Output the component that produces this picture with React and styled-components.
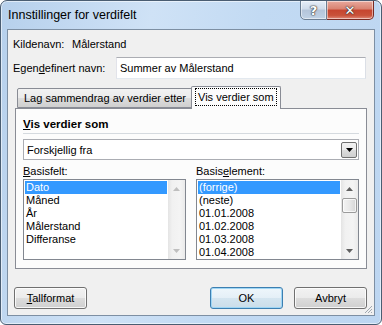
import React from 'react'
import styled, { createGlobalStyle } from 'styled-components'

const GlobalStyle = createGlobalStyle`
  body {
    margin: 0;
    background: #ffffff;
    font-family: "Liberation Sans", Arial, sans-serif;
  }
  * { box-sizing: border-box; }
`

const Window = styled.div`
  width: 382px;
  height: 325px;
  border: 1px solid #4a5d72;
  border-radius: 7px 7px 6px 6px;
  background: linear-gradient(100deg, #b6d0ec 0%, #cfe2f6 35%, #c2daf3 60%, #bdd6f1 100%);
  box-shadow: inset 0 0 0 1px rgba(255, 255, 255, 0.55);
  display: flex;
  flex-direction: column;
  overflow: hidden;
`

const TitleBar = styled.div`
  height: 28px;
  display: flex;
  align-items: flex-start;
`

const Title = styled.div`
  padding: 6px 0 0 7px;
  font-size: 12.5px;
  line-height: 16px;
  color: #000;
`

const CaptionButtons = styled.div`
  margin: -1px 7px 0 auto;
  display: flex;
`

const CaptionButton = styled.div`
  width: ${({ wide }) => (wide ? '47px' : '27px')};
  height: 20px;
  border: 1px solid ${({ danger }) => (danger ? '#7a2a22' : '#6b7e93')};
  border-left: ${({ danger }) => (danger ? 'none' : '1px solid #6b7e93')};
  border-radius: ${({ danger }) => (danger ? '0 0 5px 0' : '0 0 0 5px')};
  background: ${({ danger }) =>
    danger
      ? 'linear-gradient(#e8a99d 0%, #d98270 45%, #c6442f 50%, #c9523a 80%, #e0897a 100%)'
      : 'linear-gradient(#e6eef8 0%, #cfdbea 45%, #b4c5da 50%, #c0d2e6 100%)'};
  box-shadow: inset 0 0 0 1px rgba(255, 255, 255, 0.5);
  display: flex;
  align-items: center;
  justify-content: center;
  color: #fff;
  font-family: "DejaVu Sans", sans-serif;
  font-weight: bold;
  font-size: ${({ danger }) => (danger ? '13px' : '13px')};
  text-shadow: 0 0 1px #333, 0 0 1px #333, 0 0 2px #444;
`

const Panel = styled.div`
  margin: 0 6px;
  height: 287px;
  border: 1px solid #7d8fa3;
  background: #f0f0f0;
  display: flex;
  flex-direction: column;
  position: relative;
  font-size: 11px;
  color: #000;
`

const InfoRow = styled.div`
  margin-top: ${({ top }) => top}px;
  padding-left: 5px;
  display: flex;
  align-items: center;
  line-height: 14px;
`

const Label = styled.span`
  width: ${({ w }) => w}px;
  flex: none;
`

const TextBox = styled.div`
  width: 250px;
  height: 22px;
  border: 1px solid #abadb3;
  border-color: #abadb3 #dbdfe6 #e3e9ef #e2e3ea;
  background: #fff;
  padding: 0 3px;
  display: flex;
  align-items: center;
`

const TabStrip = styled.div`
  margin: 7px 0 0 7px;
  height: 22px;
  display: flex;
  align-items: flex-end;
  position: relative;
  z-index: 1;
`

const Tab = styled.div`
  height: ${({ active }) => (active ? '23px' : '20px')};
  margin-left: ${({ active }) => (active ? '-2px' : '2px')};
  margin-bottom: ${({ active }) => (active ? '-1px' : '0')};
  padding: 0 ${({ active }) => (active ? '4px' : '6px')};
  border: 1px solid #898c95;
  border-bottom: ${({ active }) => (active ? 'none' : '1px solid #898c95')};
  border-radius: 2px 2px 0 0;
  background: ${({ active }) =>
    active ? '#fcfcfc' : 'linear-gradient(#f2f2f2 0%, #ebebeb 50%, #dddddd 51%, #cfcfcf 100%)'};
  display: flex;
  align-items: center;
  padding-bottom: ${({ active }) => (active ? '2px' : '0')};
`

const FocusText = styled.span`
  outline: 1px dotted #000;
  outline-offset: 0;
  padding: 1px 2px;
  line-height: 14px;
`

const TabPane = styled.div`
  margin-left: 7px;
  width: 352px;
  height: 161px;
  border: 1px solid #898c95;
  background: #fcfcfc;
  padding: 0 7px;
  display: flex;
  flex-direction: column;
`

const Heading = styled.div`
  margin-top: 8px;
  font-weight: bold;
  font-size: 11.5px;
  line-height: 14px;
`

const Separator = styled.div`
  margin-top: 2px;
  height: 1px;
  background: #d5dadf;
`

const Dropdown = styled.div`
  margin-top: 5px;
  height: 21px;
  border: 1px solid #abadb3;
  background: #fff;
  display: flex;
  align-items: center;
  padding: 0 1px 0 3px;
`

const DropText = styled.span`
  flex: 1;
`

const DropButton = styled.div`
  width: 16px;
  height: 16px;
  border: 1px solid #707070;
  border-radius: 2px;
  background: linear-gradient(#f2f2f2 0%, #ebebeb 50%, #dddddd 51%, #cfcfcf 100%);
  display: flex;
  align-items: center;
  justify-content: center;
`

const Lists = styled.div`
  display: grid;
  grid-template-columns: 163px 163px;
  column-gap: 10px;
`

const ListLabel = styled.div`
  margin-top: 4px;
  line-height: 14px;
`

const ListBox = styled.div`
  margin-top: 1px;
  height: 81px;
  border: 1px solid #828790;
  background: #fff;
  display: flex;
`

const Items = styled.div`
  flex: 1;
  padding: 1px;
  overflow: hidden;
`

const Item = styled.div`
  height: 13px;
  line-height: 13px;
  padding-left: 1px;
  white-space: nowrap;
  background: ${({ selected }) => (selected ? '#3399ff' : 'transparent')};
  color: ${({ selected }) => (selected ? '#fff' : '#000')};
`

const ScrollBar = styled.div`
  width: 17px;
  display: flex;
  flex-direction: column;
  background: linear-gradient(to right, #e4e4e4 0%, #f1f1f1 25%, #f4f4f4 70%, #eaeaea 100%);
`

const ScrollArrow = styled.div`
  height: 17px;
  display: flex;
  align-items: center;
  justify-content: center;
`

const Track = styled.div`
  flex: 1;
  padding: 1px 1px 0;
`

const Thumb = styled.div`
  height: 15px;
  border: 1px solid #9b9b9b;
  border-radius: 2px;
  background: linear-gradient(to right, #f3f3f3 0%, #e8e8e8 50%, #d6d6d6 100%);
  box-shadow: inset 0 0 0 1px rgba(255, 255, 255, 0.7);
`

const ButtonRow = styled.div`
  margin-top: 18px;
  padding: 0 7px 0 6px;
  display: flex;
`

const Button = styled.div`
  width: 73px;
  height: 22px;
  margin-left: ${({ gap }) => gap || 0}px;
  border: 1px solid ${({ primary }) => (primary ? '#3c7fb1' : '#707070')};
  border-radius: 3px;
  background: ${({ primary }) =>
    primary
      ? 'linear-gradient(#eef6fb 0%, #e4eff7 50%, #d4e5f0 51%, #cbdde9 100%)'
      : 'linear-gradient(#f2f2f2 0%, #ebebeb 50%, #dddddd 51%, #cfcfcf 100%)'};
  box-shadow: inset 0 0 0 1px ${({ primary }) => (primary ? '#9fd6f5' : 'rgba(255,255,255,0.8)')};
  display: flex;
  align-items: center;
  justify-content: center;
  line-height: 14px;
`

const Spacer = styled.div`
  flex: 1;
`

const Grip = styled.svg`
  position: absolute;
  right: 1px;
  bottom: 1px;
`

const Arrow = ({ down, disabled }) => (
  <svg width="7" height="4" viewBox="0 0 7 4">
    <path
      d={down ? 'M0 0 H7 L3.5 4 Z' : 'M0 4 H7 L3.5 0 Z'}
      fill={disabled ? '#bfbfbf' : '#606060'}
    />
  </svg>
)

const Scroller = ({ disabled, thumb }) => (
  <ScrollBar>
    <ScrollArrow><Arrow disabled={disabled} /></ScrollArrow>
    <Track>{thumb && <Thumb />}</Track>
    <ScrollArrow><Arrow down disabled={disabled} /></ScrollArrow>
  </ScrollBar>
)

const fields = ['Dato', 'Måned', 'År', 'Målerstand', 'Differanse']
const elements = ['(forrige)', '(neste)', '01.01.2008', '01.02.2008', '01.03.2008', '01.04.2008']

export default function App () {
  return (
    <>
      <GlobalStyle />
      <Window>
        <TitleBar>
          <Title>Innstillinger for verdifelt</Title>
          <CaptionButtons>
            <CaptionButton>?</CaptionButton>
            <CaptionButton wide danger>✕</CaptionButton>
          </CaptionButtons>
        </TitleBar>
        <Panel>
          <InfoRow top={7}>
            <Label w={59}>Kildenavn:</Label>
            <span>Målerstand</span>
          </InfoRow>
          <InfoRow top={6}>
            <Label w={103}>Egen<u>d</u>efinert navn:</Label>
            <TextBox>Summer av Målerstand</TextBox>
          </InfoRow>
          <TabStrip>
            <Tab>Lag sammendrag av verdier etter</Tab>
            <Tab active><FocusText>Vis verdier som</FocusText></Tab>
          </TabStrip>
          <TabPane>
            <Heading><u>V</u>is verdier som</Heading>
            <Separator />
            <Dropdown>
              <DropText>Forskjellig fra</DropText>
              <DropButton>
                <svg width="7" height="4" viewBox="0 0 7 4"><path d="M0 0 H7 L3.5 4 Z" fill="#000" /></svg>
              </DropButton>
            </Dropdown>
            <Lists>
              <ListLabel><u>B</u>asisfelt:</ListLabel>
              <ListLabel>Basis<u>e</u>lement:</ListLabel>
              <ListBox>
                <Items>
                  {fields.map((f, i) => <Item key={f} selected={i === 0}>{f}</Item>)}
                </Items>
                <Scroller disabled />
              </ListBox>
              <ListBox>
                <Items>
                  {elements.map((e, i) => <Item key={e} selected={i === 0}>{e}</Item>)}
                </Items>
                <Scroller thumb />
              </ListBox>
            </Lists>
          </TabPane>
          <ButtonRow>
            <Button><span><u>T</u>allformat</span></Button>
            <Spacer />
            <Button primary>OK</Button>
            <Button gap={11}>Avbryt</Button>
          </ButtonRow>
          <Grip width="10" height="10" viewBox="0 0 10 10">
            <path d="M9 2 L2 9 M9 5 L5 9 M9 8 L8 9" stroke="#a0a8b0" strokeWidth="1" />
          </Grip>
        </Panel>
      </Window>
    </>
  )
}
